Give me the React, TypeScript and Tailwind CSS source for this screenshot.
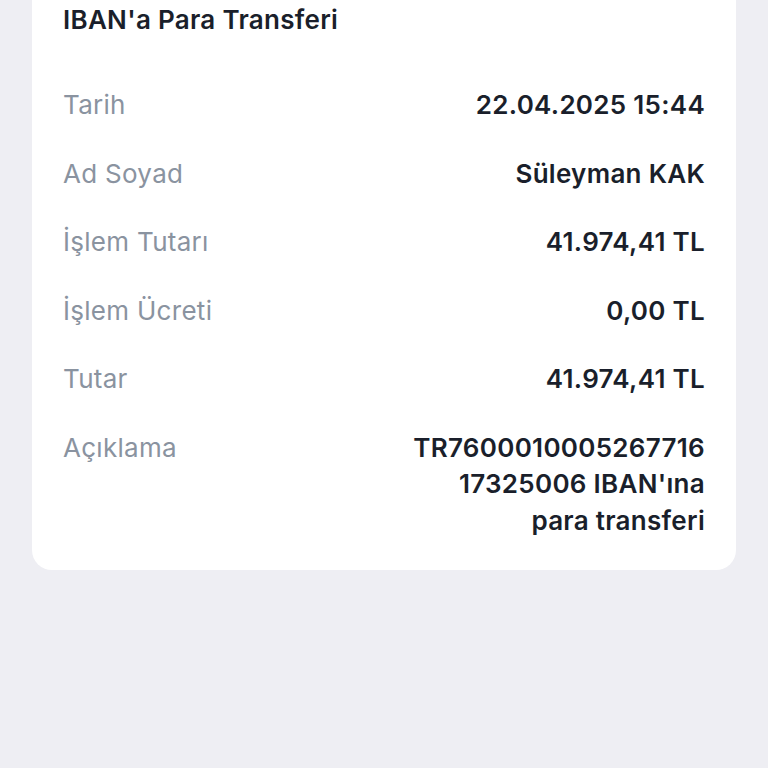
const rows = [
  { label: "Tarih", value: "22.04.2025 15:44" },
  { label: "Ad Soyad", value: "Süleyman KAK" },
  { label: "İşlem Tutarı", value: "41.974,41 TL" },
  { label: "İşlem Ücreti", value: "0,00 TL" },
  { label: "Tutar", value: "41.974,41 TL" },
];

export default function App() {
  return (
    <div className="min-h-screen bg-[#eeeef3] px-8 font-['Inter','Noto_Sans',sans-serif] tracking-[0.018em]">
      <div className="rounded-b-[20px] bg-white px-[31px] pt-1 pb-[31px]">
        <h1 className="text-[26px] leading-8 font-semibold text-[#1a1f2b]">
          IBAN'a Para Transferi
        </h1>

        <div className="mt-[51px] flex flex-col gap-8">
          {rows.map((row) => (
            <div key={row.label} className="flex items-start justify-between text-[26px] leading-[36.5px]">
              <span className="text-[#8a93a0]">{row.label}</span>
              <span className="font-semibold text-[#1a1f2b]">{row.value}</span>
            </div>
          ))}
          <div className="flex items-start justify-between text-[26px] leading-[36.5px]">
            <span className="text-[#8a93a0]">Açıklama</span>
            <span className="text-right font-semibold text-[#1a1f2b]">
              TR7600010005267716
              <br />
              17325006 IBAN'ına
              <br />
              para transferi
            </span>
          </div>
        </div>
      </div>
    </div>
  );
}
